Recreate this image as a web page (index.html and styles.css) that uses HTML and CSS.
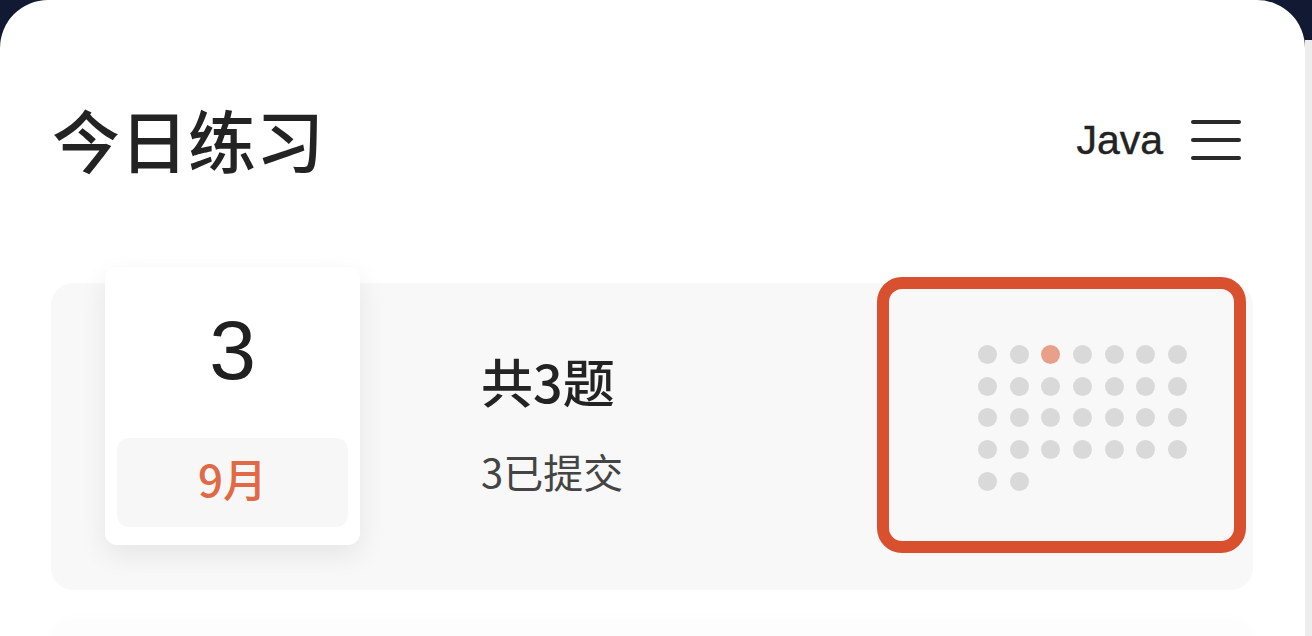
FILE: index.html
```html
<!DOCTYPE html>
<html lang="zh-CN">
<head>
    <meta charset="UTF-8">
    <meta name="viewport" content="width=device-width, initial-scale=1.0">
    <title>今日练习</title>
    <link rel="stylesheet" href="styles.css">
</head>
<body>
<div class="page">
    <div class="panel">
        <header class="header">
            <h1 class="title">今日练习</h1>
            <div class="lang">
                <span class="lang-name">Java</span>
                <svg class="menu-icon" width="50" height="42" viewBox="0 0 50 42" fill="none" stroke="#2a2a2a" stroke-width="4" stroke-linecap="round">
                    <path d="M2 3h46"/>
                    <path d="M2 21h46"/>
                    <path d="M2 39h46"/>
                </svg>
            </div>
        </header>

        <section class="practice">
            <div class="date-card">
                <div class="day">3</div>
                <div class="month">9月</div>
            </div>
            <div class="summary">
                <div class="total">共3题</div>
                <div class="done">3已提交</div>
            </div>
            <div class="calendar">
                <div class="dots" id="dots"></div>
            </div>
        </section>

        <div class="next-card"></div>
    </div>
    <div class="side-strip"></div>
</div>

<script>
    // 30 days of September, today highlighted
    const dots = document.getElementById('dots');
    for (let i = 1; i <= 30; i++) {
        const dot = document.createElement('span');
        dot.className = i === 3 ? 'dot today' : 'dot';
        dots.appendChild(dot);
    }
</script>
</body>
</html>
```

FILE: styles.css
```css
:root {
    --navy: #121a33;
    --text: #232323;
    --muted: #444;
    --card-bg: #f8f8f8;
    --accent: #d9502f;
    --month: #e06a45;
}

* {
    margin: 0;
    padding: 0;
    box-sizing: border-box;
}

body {
    background: var(--navy);
    font-family: "Liberation Sans", "Noto Sans CJK SC", sans-serif;
    color: var(--text);
    width: 1312px;
    height: 636px;
    overflow: hidden;
}

.page {
    display: flex;
    height: 636px;
}

.panel {
    width: 1305px;
    background: #fff;
    border-radius: 48px 48px 0 0;
    padding: 0 52px 0 51px;
}

.side-strip {
    flex: 1;
    background: #ededed;
    margin-top: 40px;
}

.header {
    display: flex;
    justify-content: space-between;
    align-items: center;
    height: 142px;
    padding-top: 100px;
    padding-right: 12px;
    margin-bottom: 141px;
}

.title {
    font-family: "Noto Sans CJK SC", sans-serif;
    font-size: 68px;
    font-weight: 500;
    line-height: 1;
    margin-left: 1px;
    margin-top: 36px;
}

.lang {
    display: flex;
    align-items: center;
    gap: 28px;
    margin-top: 38px;
}

.lang-name {
    font-size: 41px;
    color: var(--text);
    -webkit-text-stroke: 0.4px var(--text);
}

.practice {
    display: flex;
    align-items: flex-start;
    height: 307px;
    background: var(--card-bg);
    border-radius: 22px;
}

.date-card {
    width: 255px;
    height: 278px;
    margin-top: -16px;
    margin-left: 54px;
    background: #fff;
    border-radius: 12px;
    box-shadow: 0 10px 28px rgba(0, 0, 0, 0.08);
    padding: 0 12px 18px;
    display: flex;
    flex-direction: column;
}

.day {
    flex: 1;
    display: flex;
    align-items: center;
    justify-content: center;
    font-size: 84px;
    color: #202020;
    padding-bottom: 4px;
}

.month {
    height: 89px;
    display: flex;
    align-items: center;
    justify-content: center;
    background: #f7f7f7;
    border-radius: 12px;
    font-family: "Noto Sans CJK SC", sans-serif;
    font-size: 44px;
    font-weight: 500;
    color: var(--month);
    padding-bottom: 10px;
}

.summary {
    margin-left: 121px;
    margin-top: 64px;
}

.total {
    font-family: "Noto Sans CJK SC", sans-serif;
    font-size: 52px;
    font-weight: 500;
    line-height: 1.3;
}

.done {
    font-family: "Noto Sans CJK SC", sans-serif;
    font-size: 40px;
    color: var(--muted);
    line-height: 1.3;
    margin-top: 30px;
}

.calendar {
    margin-left: auto;
    margin-right: 7px;
    margin-top: -6px;
    width: 369px;
    height: 276px;
    border: 12px solid var(--accent);
    border-radius: 25px;
    background: var(--card-bg);
    padding: 56px 0 0 89px;
}

.dots {
    display: grid;
    grid-template-columns: repeat(7, 19px);
    gap: 12.7px;
}

.dot {
    width: 19px;
    height: 19px;
    border-radius: 50%;
    background: #d9d9d9;
}

.dot.today {
    background: #e9a089;
}

.next-card {
    height: 40px;
    margin-top: 32px;
    border-radius: 22px;
    background: #fdfdfd;
    box-shadow: 0 -4px 12px rgba(0, 0, 0, 0.015);
}
```
